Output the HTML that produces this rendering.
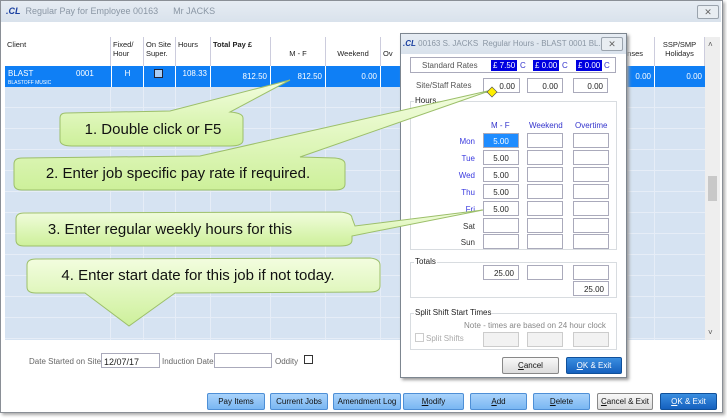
<!DOCTYPE html><html><head><style>
*{box-sizing:border-box;margin:0;padding:0}
body{width:727px;height:418px;background:#fff;font-family:"Liberation Sans",sans-serif;font-size:8px;color:#333;position:relative;overflow:hidden}
.a{position:absolute}
.win{left:0;top:0;width:723px;height:413px;border:1px solid #8a8f96;background:#fff;box-shadow:2px 2px 3px #aaa}
.tb{left:1px;top:1px;width:720px;height:21px;background:linear-gradient(#e6ecf3,#d9e2ec)}
.tt{color:#8a96a4;font-size:9px;white-space:nowrap}
.cls{width:22px;height:14px;border:1px solid #9aa3ad;border-radius:2px;background:#e8edf2;font-size:9px;color:#666;text-align:center;line-height:12px}
.hd{background:#fff;border-right:1px solid #ccd;border-bottom:1px solid #ccd;height:30px;top:37px;font-size:7.5px;color:#222;padding:3px 2px}
.cell{color:#fff;font-size:8px;top:66px;height:21px;border-right:1px solid #fff;text-align:right;padding:6px 3px}
.in{background:#fff;border:1px solid #aab;height:15px;font-size:8px;text-align:right;padding:3px 4px 0 0;color:#222}
.lbl{font-size:8px;color:#3a3adf;text-align:right;width:40px}
.btn{top:393px;height:17px;border:1px solid #4e8fd6;border-radius:2px;background:linear-gradient(#a9d3fb,#79b6f2);font-size:8px;color:#111;text-align:center;line-height:15px}
.grp{border:1px solid #d8dce0}
.gl{background:#fff;font-size:8px;color:#222;padding:0 1px}
.vl{top:87px;height:253px;width:1px;background:#e6edf7}
</style></head><body>
<div class="a win"></div>
<div class="a tb"></div>
<div class="a tt" style="left:6px;top:6px"><b style="color:#1a3fa0;font-style:italic">.CL</b>&nbsp; Regular Pay for Employee 00163 &nbsp;&nbsp;&nbsp;&nbsp; Mr JACKS</div>
<div class="a cls" style="left:697px;top:5px">✕</div>
<!-- grid -->
<div class="a" style="left:5px;top:37px;width:700px;height:303px;background:#d6e3f2;border:1px solid #aab"></div>
<div class="a" style="left:5px;top:87px;width:700px;height:253px;background:repeating-linear-gradient(#d6e3f2 0 20px,#e6edf7 20px 21px)"></div>
<div class="a vl" style="left:110px"></div><div class="a vl" style="left:143px"></div><div class="a vl" style="left:175px"></div><div class="a vl" style="left:210px"></div><div class="a vl" style="left:270px"></div><div class="a vl" style="left:325px"></div><div class="a vl" style="left:380px"></div><div class="a vl" style="left:654px"></div>
<div class="a hd" style="left:5px;width:106px">Client</div>
<div class="a hd" style="left:111px;width:33px">Fixed/<br>Hour</div>
<div class="a hd" style="left:144px;width:32px">On Site<br>Super.</div>
<div class="a hd" style="left:176px;width:35px">Hours</div>
<div class="a hd" style="left:211px;width:60px;font-weight:bold">Total Pay £</div>
<div class="a hd" style="left:271px;width:55px;text-align:center;padding-top:12px">M - F</div>
<div class="a hd" style="left:326px;width:55px;text-align:center;padding-top:12px">Weekend</div>
<div class="a hd" style="left:381px;width:240px;padding-top:12px">Ov</div>
<div class="a hd" style="left:621px;width:34px;padding-top:12px">enses</div>
<div class="a hd" style="left:655px;width:50px;text-align:center">SSP/SMP<br>Holidays</div>
<div class="a" style="left:5px;top:66px;width:700px;height:21px;background:#0f7ff5"></div>
<div class="a" style="left:8px;top:69px;color:#fff;font-size:8px">BLAST</div>
<div class="a" style="left:76px;top:69px;color:#fff;font-size:8px">0001</div>
<div class="a" style="left:8px;top:80px;color:#fff;font-size:5px">BLASTOFF MUSIC</div>
<div class="a cell" style="left:111px;width:33px;text-align:center;border-left:1px solid #fff;padding-top:3px">H</div>
<div class="a" style="left:154px;top:69px;width:9px;height:9px;background:#a9cdf6;border:1px solid #223"></div>
<div class="a cell" style="left:144px;width:32px"></div>
<div class="a cell" style="left:176px;width:35px;padding-top:3px">108.33</div>
<div class="a cell" style="left:211px;width:60px">812.50</div>
<div class="a cell" style="left:271px;width:55px">812.50</div>
<div class="a cell" style="left:326px;width:55px">0.00</div>
<div class="a cell" style="left:621px;width:34px">0.00</div>
<div class="a cell" style="left:655px;width:50px;border:none">0.00</div>
<div class="a" style="left:705px;top:37px;width:15px;height:303px;background:#eee"></div>
<div class="a" style="left:708px;top:176px;width:9px;height:25px;background:#c8c8c8"></div>
<div class="a" style="left:708px;top:40px;font-size:8px;color:#555">˄</div>
<div class="a" style="left:708px;top:328px;font-size:8px;color:#555">˅</div>
<!-- bottom -->
<div class="a" style="left:29px;top:357px;color:#666">Date Started on Site</div>
<div class="a in" style="left:101px;top:353px;width:59px;text-align:left;padding-left:2px;font-size:9px">12/07/17</div>
<div class="a" style="left:162px;top:357px;color:#666">Induction Date</div>
<div class="a in" style="left:214px;top:353px;width:58px"></div>
<div class="a" style="left:275px;top:357px;color:#666">Oddity</div>
<div class="a" style="left:304px;top:355px;width:9px;height:9px;border:1px solid #333"></div>
<div class="a btn" style="left:207px;width:58px">Pay Items</div>
<div class="a btn" style="left:270px;width:58px">Current Jobs</div>
<div class="a btn" style="left:333px;width:68px">Amendment Log</div>
<div class="a btn" style="left:403px;width:61px"><u>M</u>odify</div>
<div class="a btn" style="left:470px;width:57px"><u>A</u>dd</div>
<div class="a btn" style="left:533px;width:57px"><u>D</u>elete</div>
<div class="a btn" style="left:597px;width:56px;background:linear-gradient(#f8f8f8,#dcdcdc);border-color:#888"><u>C</u>ancel &amp; Exit</div>
<div class="a btn" style="left:660px;width:57px;background:linear-gradient(#3a8ee0,#1560be);color:#fff;border-color:#10509a"><u>O</u>K &amp; Exit</div>
<!-- dialog -->
<div class="a" style="left:400px;top:33px;width:227px;height:345px;background:#fff;border:1px solid #7d8690;box-shadow:2px 2px 3px #999"></div>
<div class="a" style="left:401px;top:34px;width:225px;height:20px;background:linear-gradient(#e6ecf3,#d9e2ec)"></div>
<div class="a tt" style="left:403px;top:39px;font-size:8px"><b style="color:#1a3fa0;font-style:italic">.CL</b> 00163 S. JACKS &nbsp;Regular Hours - BLAST 0001 BL...</div>
<div class="a cls" style="left:601px;top:37px">✕</div>
<div class="a" style="left:410px;top:57px;width:206px;height:16px;border:1px solid #aab"></div>
<div class="a" style="left:422px;top:61px;color:#555">Standard Rates</div>
<div class="a" style="left:491px;top:60px;background:#0000e0;color:#fff;padding:1px 2px;font-size:8px">£ 7.50</div><div class="a" style="left:520px;top:61px;color:#33c">C</div>
<div class="a" style="left:533px;top:60px;background:#0000e0;color:#fff;padding:1px 2px;font-size:8px">£ 0.00</div><div class="a" style="left:562px;top:61px;color:#33c">C</div>
<div class="a" style="left:576px;top:60px;background:#0000e0;color:#fff;padding:1px 2px;font-size:8px">£ 0.00</div><div class="a" style="left:604px;top:61px;color:#33c">C</div>
<div class="a" style="left:416px;top:81px;color:#555">Site/Staff Rates</div>
<div class="a in" style="left:483px;top:78px;width:37px">0.00</div>
<div class="a in" style="left:527px;top:78px;width:36px">0.00</div>
<div class="a in" style="left:573px;top:78px;width:35px">0.00</div>
<div class="a grp" style="left:410px;top:101px;width:207px;height:149px"></div>
<div class="a gl" style="left:414px;top:96px">Hours</div>
<div class="a" style="left:491px;top:121px;color:#33c">M - F</div>
<div class="a" style="left:529px;top:121px;color:#33c">Weekend</div>
<div class="a" style="left:575px;top:121px;color:#33c">Overtime</div>
<div class="a lbl" style="left:435px;top:137px">Mon</div>
<div class="a lbl" style="left:435px;top:154px">Tue</div>
<div class="a lbl" style="left:435px;top:171px">Wed</div>
<div class="a lbl" style="left:435px;top:188px">Thu</div>
<div class="a lbl" style="left:435px;top:205px">Fri</div>
<div class="a lbl" style="left:435px;top:222px;color:#333">Sat</div>
<div class="a lbl" style="left:435px;top:238px;color:#333">Sun</div>
<div class="a in" style="left:483px;top:133px;width:36px;background:#1e8cff;color:#fff;text-align:center;padding-right:0">5.00</div>
<div class="a in" style="left:483px;top:150px;width:36px;text-align:center;padding-right:0">5.00</div>
<div class="a in" style="left:483px;top:167px;width:36px;text-align:center;padding-right:0">5.00</div>
<div class="a in" style="left:483px;top:184px;width:36px;text-align:center;padding-right:0">5.00</div>
<div class="a in" style="left:483px;top:201px;width:36px;text-align:center;padding-right:0">5.00</div>
<div class="a in" style="left:483px;top:218px;width:36px"></div>
<div class="a in" style="left:483px;top:234px;width:36px"></div>
<div class="a in" style="left:527px;top:133px;width:36px"></div><div class="a in" style="left:573px;top:133px;width:36px"></div>
<div class="a in" style="left:527px;top:150px;width:36px"></div><div class="a in" style="left:573px;top:150px;width:36px"></div>
<div class="a in" style="left:527px;top:167px;width:36px"></div><div class="a in" style="left:573px;top:167px;width:36px"></div>
<div class="a in" style="left:527px;top:184px;width:36px"></div><div class="a in" style="left:573px;top:184px;width:36px"></div>
<div class="a in" style="left:527px;top:201px;width:36px"></div><div class="a in" style="left:573px;top:201px;width:36px"></div>
<div class="a in" style="left:527px;top:218px;width:36px"></div><div class="a in" style="left:573px;top:218px;width:36px"></div>
<div class="a in" style="left:527px;top:234px;width:36px"></div><div class="a in" style="left:573px;top:234px;width:36px"></div>
<div class="a grp" style="left:410px;top:262px;width:207px;height:36px"></div>
<div class="a gl" style="left:414px;top:257px">Totals</div>
<div class="a in" style="left:483px;top:265px;width:36px">25.00</div>
<div class="a in" style="left:527px;top:265px;width:36px"></div>
<div class="a in" style="left:573px;top:265px;width:36px"></div>
<div class="a in" style="left:573px;top:281px;width:36px">25.00</div>
<div class="a grp" style="left:410px;top:313px;width:207px;height:37px"></div>
<div class="a gl" style="left:414px;top:308px">Split Shift Start Times</div>
<div class="a" style="left:464px;top:321px;color:#888">Note - times are based on 24 hour clock</div>
<div class="a" style="left:415px;top:333px;width:9px;height:9px;border:1px solid #ccc"></div>
<div class="a" style="left:426px;top:334px;color:#aaa">Split Shifts</div>
<div class="a in" style="left:483px;top:332px;width:36px;background:#f2f2f2;border-color:#ccc"></div>
<div class="a in" style="left:527px;top:332px;width:36px;background:#f2f2f2;border-color:#ccc"></div>
<div class="a in" style="left:573px;top:332px;width:36px;background:#f2f2f2;border-color:#ccc"></div>
<div class="a btn" style="top:357px;left:502px;width:57px;background:linear-gradient(#f8f8f8,#dcdcdc);border-color:#888"><u>C</u>ancel</div>
<div class="a btn" style="top:357px;left:566px;width:56px;background:linear-gradient(#3a8ee0,#1560be);color:#fff;border-color:#10509a"><u>O</u>K &amp; Exit</div>
<!-- callouts -->
<svg class="a" style="left:0;top:0" width="727" height="418">
<defs><linearGradient id="g" x1="0" y1="0" x2="0" y2="1"><stop offset="0" stop-color="#f3fde0"/><stop offset="1" stop-color="#cdf09a"/></linearGradient></defs>
<g fill="url(#g)" stroke="#9cbf6a" stroke-width="1">
<path d="M66,113 L170,111 L290,80 L230,112 Q243,113 243,118 L243,140 Q243,146 230,146 L72,146 Q60,146 60,140 L60,118 Q60,113 66,113Z"/>
<path d="M22,158 L200,156 L492,90 L300,157 L335,158 Q345,159 345,164 L345,184 Q345,190 335,190 L22,190 Q14,190 14,184 L14,164 Q14,158 22,158Z"/>
<path d="M24,213 L340,212 Q352,213 352,218 L355,226 L483,210 L352,236 L352,240 Q352,246 340,246 L24,246 Q16,246 16,240 L16,219 Q16,213 24,213Z"/>
<path d="M36,259 L370,258 Q380,259 380,265 L380,286 Q380,292 370,292 L175,293 L129,326 L85,293 L36,293 Q27,293 27,287 L27,265 Q27,259 36,259Z"/>
</g>
<g font-family="Liberation Sans,sans-serif" font-size="15" fill="#111" text-anchor="middle">
<text x="153" y="134">1. Double click or F5</text>
<text x="178" y="178">2. Enter job specific pay rate if required.</text>
<text x="170" y="234">3. Enter regular weekly hours for this</text>
<text x="198" y="280">4. Enter start date for this job if not today.</text>
</g>
<path d="M492,87 L497,92 L492,97 L487,92Z" fill="#ffef00" stroke="#555" stroke-width="0.7"/>
</svg>
</body></html>
